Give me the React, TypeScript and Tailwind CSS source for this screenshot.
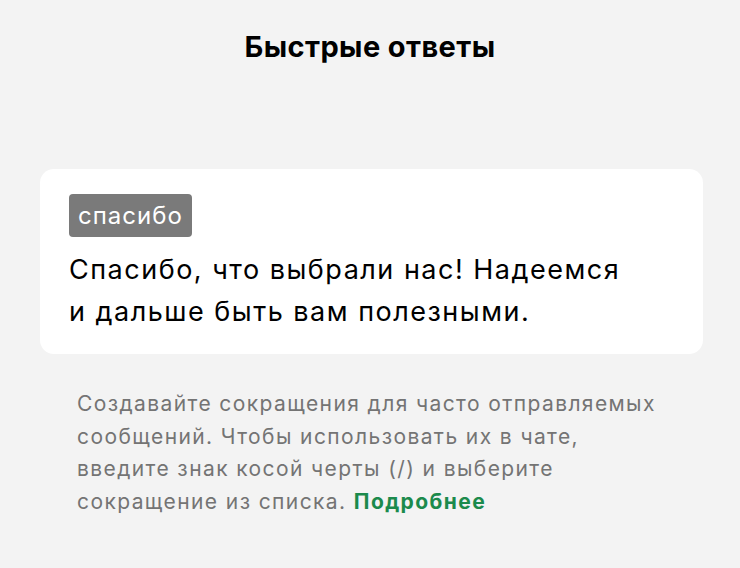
const App = () => {
  return (
    <div
      className="w-[740px] h-[568px] bg-[#f3f3f3] overflow-hidden"
      style={{ fontFamily: "Inter, 'Liberation Sans', sans-serif" }}
    >
      <h1 className="pt-[29px] text-center text-[29px] leading-[36px] font-bold tracking-[0.4px] text-black">
        Быстрые ответы
      </h1>

      <div className="mt-[104px] ml-[40px] mr-[37px] h-[185px] bg-white rounded-[14px] pt-[25px] pl-[29px]">
        <span className="inline-block rounded-[4px] bg-[#7a7a7a] px-[9px] h-[43px] leading-[43px] text-[24px] tracking-[1px] text-white">
          спасибо
        </span>
        <p className="mt-[12px] text-[27px] leading-[42px] tracking-[1.5px] text-black">
          Спасибо, что выбрали нас! Надеемся
          <br />
          и дальше быть вам полезными.
        </p>
      </div>

      <p className="mt-[34px] ml-[77px] mr-[20px] text-[21px] leading-[32.5px] tracking-[1.4px] text-[#747474]">
        Создавайте сокращения для часто отправляемых
        <br />
        сообщений. Чтобы использовать их в чате,
        <br />
        введите знак косой черты (/) и выберите
        <br />
        сокращение из списка.{" "}
        <a className="font-bold text-[#1b8a4c]">Подробнее</a>
      </p>
    </div>
  );
};

export default App;
